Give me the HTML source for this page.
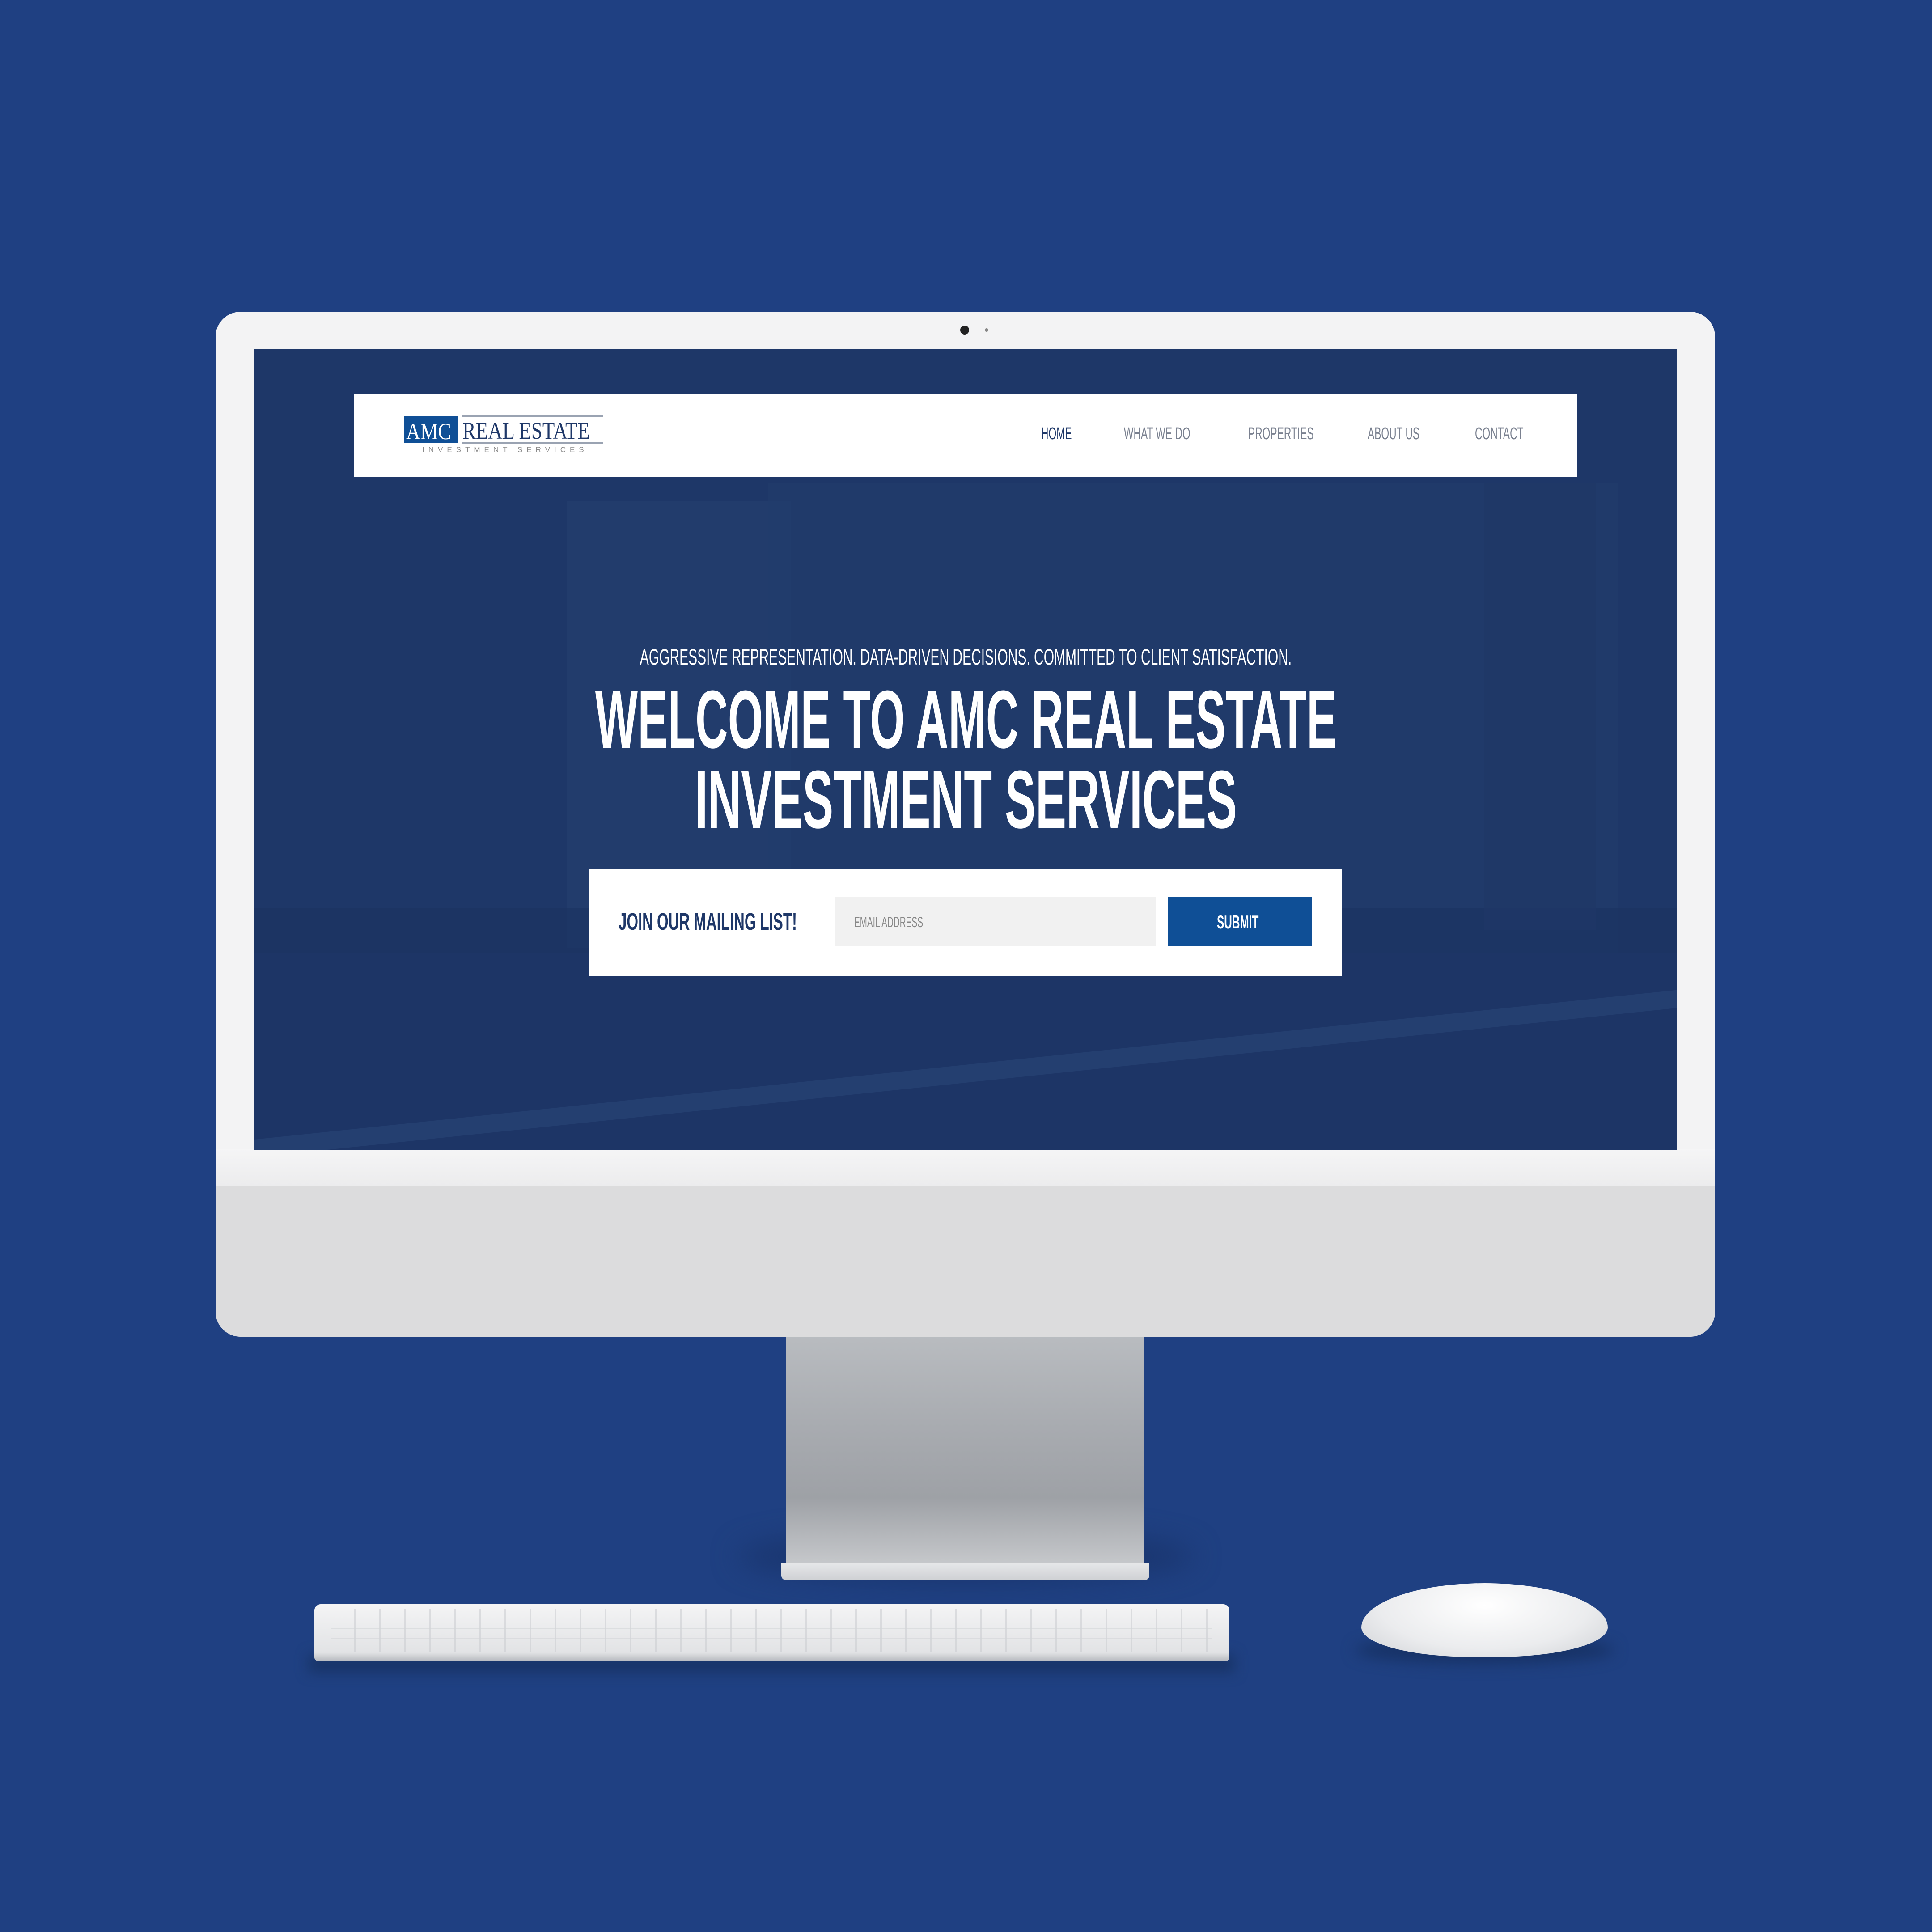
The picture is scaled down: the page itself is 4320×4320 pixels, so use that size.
<!DOCTYPE html>
<html><head><meta charset="utf-8"><style>
*{margin:0;padding:0;box-sizing:border-box}
body{width:4320px;height:4320px;background:#1f4082;position:relative;overflow:hidden;font-family:"Liberation Sans",sans-serif}
.a{position:absolute}
.t{position:absolute;white-space:nowrap;transform-origin:0 50%}
.c{position:absolute;white-space:nowrap;left:0;width:4320px;text-align:center}
.c span{display:inline-block}
</style></head><body>
<div class="a" style="left:1650px;top:3420px;width:1020px;height:120px;background:#1a3670;filter:blur(30px);border-radius:50%"></div>
<div class="a" style="left:1758px;top:2985px;width:801px;height:520px;background:linear-gradient(180deg,#b9bcc0 0%,#a8abb0 40%,#9ea1a6 70%,#c8cacd 100%)"></div>
<div class="a" style="left:1747px;top:3495px;width:823px;height:38px;background:linear-gradient(180deg,#e6e7e9,#cfd1d4);border-radius:0 0 10px 10px"></div>
<div class="a" style="left:482px;top:697px;width:3353px;height:2292px;background:#f3f3f4;border-radius:56px;overflow:hidden">
  <div class="a" style="left:0;top:1955px;width:3353px;height:337px;background:#dcdcdd"></div>
  <div class="a" style="left:0;top:1873px;width:3353px;height:82px;background:linear-gradient(180deg,#f5f5f6,#ececed)"></div>
</div>
<div class="a" style="left:2147px;top:728px;width:20px;height:20px;border-radius:50%;background:#222"></div>
<div class="a" style="left:2202px;top:734px;width:8px;height:8px;border-radius:50%;background:#888"></div>
<div class="a" style="left:568px;top:780px;width:3182px;height:1792px;background:#1e3768;overflow:hidden">
  <div class="a" style="left:700px;top:340px;width:500px;height:1000px;background:#243f70;opacity:.6"></div>
  <div class="a" style="left:1150px;top:300px;width:1900px;height:1050px;background:#223c6c;opacity:.6"></div>
  <div class="a" style="left:0;top:1250px;width:3182px;height:100px;background:#1b3260;opacity:.6"></div>
  <div class="a" style="left:0;top:1350px;width:3182px;height:442px;background:#1d3566"></div>
  <div class="a" style="left:-200px;top:1600px;width:3600px;height:40px;background:#243f70;transform:rotate(-6deg)"></div>
  <div class="a" style="left:2750px;top:300px;width:250px;height:1000px;background:#1f3866;opacity:.7"></div>
</div>
<div class="a" style="left:791px;top:882px;width:2736px;height:184px;background:#fff"></div>
<div class="a" style="left:904px;top:931px;width:121px;height:60px;background:#0f4f96"></div>
<div class="t" style="left:908px;top:936px;font-family:'Liberation Serif',serif;font-size:52px;color:#fff;transform:scaleX(.85)">AMC</div>
<div class="a" style="left:1033px;top:928px;width:315px;height:4px;background:#9aa3b2"></div>
<div class="a" style="left:1033px;top:988px;width:315px;height:4px;background:#9aa3b2"></div>
<div class="t" style="left:1034px;top:932px;font-family:'Liberation Serif',serif;font-size:54px;color:#1e3768;transform:scaleX(.83)">REAL ESTATE</div>
<div class="t" style="left:944px;top:996px;font-size:17px;letter-spacing:9px;color:#888">INVESTMENT SERVICES</div>
<div class="t" style="left:2328px;top:949px;font-size:38px;color:#1e3768;transform:scaleX(.6)">HOME</div>
<div class="t" style="left:2513px;top:949px;font-size:38px;color:#7a8190;transform:scaleX(.6)">WHAT WE DO</div>
<div class="t" style="left:2791px;top:949px;font-size:38px;color:#7a8190;transform:scaleX(.6)">PROPERTIES</div>
<div class="t" style="left:3058px;top:949px;font-size:38px;color:#7a8190;transform:scaleX(.6)">ABOUT US</div>
<div class="t" style="left:3298px;top:949px;font-size:38px;color:#7a8190;transform:scaleX(.6)">CONTACT</div>
<div class="c" style="top:1440px;font-size:50px;color:#fff"><span style="transform:scaleX(.6)">AGGRESSIVE REPRESENTATION. DATA-DRIVEN DECISIONS. COMMITTED TO CLIENT SATISFACTION.</span></div>
<div class="c" style="top:1518px;font-size:184px;font-weight:bold;color:#fff;line-height:180px"><span style="transform:scaleX(.548)">WELCOME TO AMC REAL ESTATE</span></div>
<div class="c" style="top:1697px;font-size:184px;font-weight:bold;color:#fff;line-height:180px"><span style="transform:scaleX(.56)">INVESTMENT SERVICES</span></div>
<div class="a" style="left:1317px;top:1942px;width:1683px;height:240px;background:#fff"></div>
<div class="t" style="left:1383px;top:2030px;font-size:54px;font-weight:bold;color:#1e3768;transform:scaleX(.61)">JOIN OUR MAILING LIST!</div>
<div class="a" style="left:1868px;top:2006px;width:716px;height:110px;background:#f1f1f1"></div>
<div class="t" style="left:1910px;top:2044px;font-size:32px;color:#888;transform:scaleX(.6)">EMAIL ADDRESS</div>
<div class="a" style="left:2612px;top:2006px;width:322px;height:110px;background:#0f4f96"></div>
<div class="t" style="left:2721px;top:2038px;font-size:42px;font-weight:bold;color:#fff;transform:scaleX(.58)">SUBMIT</div>
<div class="a" style="left:690px;top:3700px;width:2070px;height:40px;background:#183468;filter:blur(14px)"></div>
<div class="a" style="left:703px;top:3587px;width:2046px;height:127px;background:linear-gradient(180deg,#f4f4f5,#e2e3e5 85%,#b8bbc0);border-radius:14px 14px 8px 8px"></div>
<div class="a" style="left:740px;top:3598px;width:1970px;height:95px;background:repeating-linear-gradient(90deg,transparent 0 52px,#c9cbcf 52px 56px);opacity:.55"></div>
<div class="a" style="left:740px;top:3620px;width:1970px;height:60px;background:repeating-linear-gradient(180deg,transparent 0 20px,#d3d5d8 20px 22px);opacity:.6"></div>
<div class="a" style="left:3030px;top:3660px;width:580px;height:60px;background:#173266;filter:blur(16px);border-radius:50%"></div>
<div class="a" style="left:3044px;top:3540px;width:551px;height:165px;background:radial-gradient(ellipse at 50% 30%,#ffffff,#ebecee 60%,#cfd1d5);border-radius:50% 50% 45% 45% / 60% 60% 40% 40%"></div>
</body></html>
